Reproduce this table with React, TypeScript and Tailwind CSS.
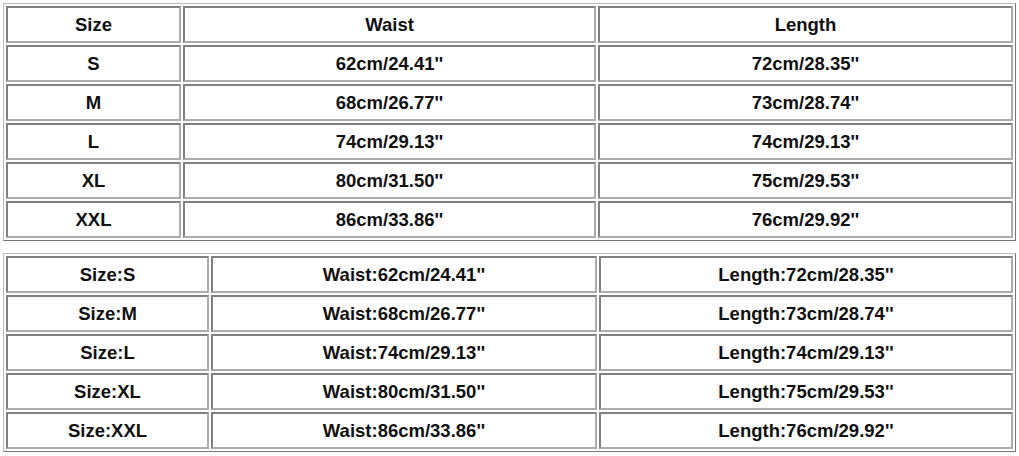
import React from "react";

const top = [
  ["Size", "Waist", "Length"],
  ["S", "62cm/24.41''", "72cm/28.35''"],
  ["M", "68cm/26.77''", "73cm/28.74''"],
  ["L", "74cm/29.13''", "74cm/29.13''"],
  ["XL", "80cm/31.50''", "75cm/29.53''"],
  ["XXL", "86cm/33.86''", "76cm/29.92''"],
];

const bottom = [
  ["Size:S", "Waist:62cm/24.41''", "Length:72cm/28.35''"],
  ["Size:M", "Waist:68cm/26.77''", "Length:73cm/28.74''"],
  ["Size:L", "Waist:74cm/29.13''", "Length:74cm/29.13''"],
  ["Size:XL", "Waist:80cm/31.50''", "Length:75cm/29.53''"],
  ["Size:XXL", "Waist:86cm/33.86''", "Length:76cm/29.92''"],
];

function Cell({ text }: { text: string }) {
  return (
    <div className="flex h-[37px] items-center justify-center border-2 border-t-[#808080] border-l-[#808080] border-b-[#acacac] border-r-[#acacac] text-[18.5px] font-bold text-[#111111]">
      {text}
    </div>
  );
}

export default function App() {
  return (
    <div
      className="flex min-h-[456px] w-[1019px] flex-col bg-white pl-[3px] pt-[3px]"
      style={{ fontFamily: '"Liberation Sans", Arial, sans-serif' }}
    >
      <div className="grid w-[1013px] grid-cols-[175px_413px_415px] gap-[2px] border border-t-[#bcbcbc] border-l-[#bcbcbc] border-b-[#767676] border-r-[#767676] p-[2px]">
        {top.flat().map((t, i) => (
          <Cell key={i} text={t} />
        ))}
      </div>
      <div className="mt-[12px] grid w-[1013px] grid-cols-[203px_386px_414px] gap-[2px] border border-t-[#bcbcbc] border-l-[#bcbcbc] border-b-[#767676] border-r-[#767676] p-[2px]">
        {bottom.flat().map((t, i) => (
          <Cell key={i} text={t} />
        ))}
      </div>
    </div>
  );
}
